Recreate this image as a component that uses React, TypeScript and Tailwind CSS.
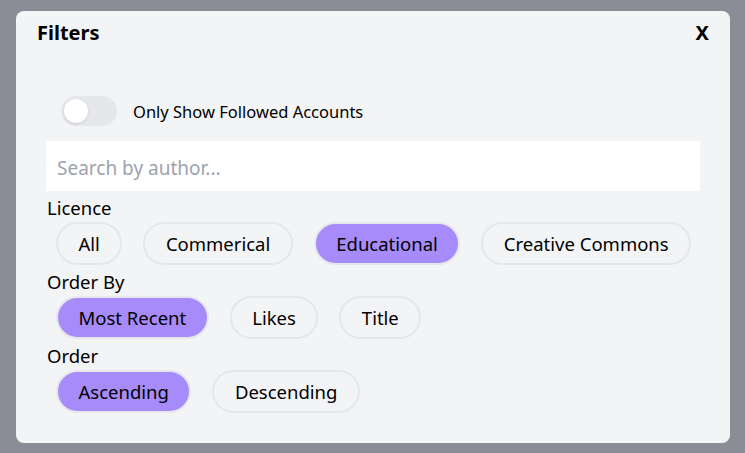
import React, { useState } from 'react';

const licences = ['All', 'Commerical', 'Educational', 'Creative Commons'];
const orderBys = ['Most Recent', 'Likes', 'Title'];
const orders = ['Ascending', 'Descending'];

interface ChipGroupProps {
    label: string;
    options: string[];
    value: string;
    onChange: (v: string) => void;
}

const ChipGroup: React.FC<ChipGroupProps> = ({ label, options, value, onChange }) => {
    return (
        <div>
            <div className="h-[31px] pt-[2px] text-[18.5px] leading-[29px] text-black pl-px">{label}</div>
            <div className="flex gap-[21px] pl-[10px]">
                {options.map((opt) => (
                    <button
                        key={opt}
                        onClick={() => onChange(opt)}
                        className={
                            'h-[43px] px-[20.5px] pt-px rounded-full border-2 border-[#e5e7eb] text-[18.5px] text-black ' +
                            (opt === value ? 'bg-[#a78bfa]' : 'bg-transparent')
                        }
                    >
                        {opt}
                    </button>
                ))}
            </div>
        </div>
    );
};

const App: React.FC = () => {
    const [followed, setFollowed] = useState(false);
    const [author, setAuthor] = useState('');
    const [licence, setLicence] = useState('Educational');
    const [orderBy, setOrderBy] = useState('Most Recent');
    const [order, setOrder] = useState('Ascending');

    return (
        <div
            className="h-[453px] w-[745px] bg-[#8a8d95] pt-[11px] pl-[16px] pr-[15px]"
            style={{ fontFamily: '"Noto Sans", "Open Sans", sans-serif' }}
        >
            <div className="h-[432px] rounded-lg bg-[#f3f4f6]">
                <div className="flex items-center justify-between px-[21px] pt-[8px] h-[36px]">
                    <h2 className="text-[20px] font-bold leading-[28px] text-black">Filters</h2>
                    <button className="text-[20px] font-bold leading-[28px] text-black">X</button>
                </div>

                <div className="px-[30px]">
                    <div className="flex items-center gap-4 ml-[15px] mt-[49px]">
                        <button
                            onClick={() => setFollowed(!followed)}
                            className={
                                'relative h-[30px] w-[56px] rounded-full ' +
                                (followed ? 'bg-[#a78bfa]' : 'bg-[#e5e7eb]')
                            }
                        >
                            <span
                                className={
                                    'absolute top-[3px] h-[24px] w-[24px] rounded-full bg-white shadow-sm ' +
                                    (followed ? 'left-[29px]' : 'left-[3px]')
                                }
                            />
                        </button>
                        <span className="pt-[2px] text-[16.5px] text-black">Only Show Followed Accounts</span>
                    </div>

                    <input
                        type="text"
                        value={author}
                        onChange={(e) => setAuthor(e.target.value)}
                        placeholder="Search by author..."
                        className="mt-[15px] block h-[50px] w-full bg-white px-[11px] pt-[3px] text-[19px] text-black placeholder-[#9ca3af] outline-none"
                    />

                    <ChipGroup label="Licence" options={licences} value={licence} onChange={setLicence} />
                    <ChipGroup label="Order By" options={orderBys} value={orderBy} onChange={setOrderBy} />
                    <ChipGroup label="Order" options={orders} value={order} onChange={setOrder} />
                </div>
            </div>
        </div>
    );
};

export default App;
